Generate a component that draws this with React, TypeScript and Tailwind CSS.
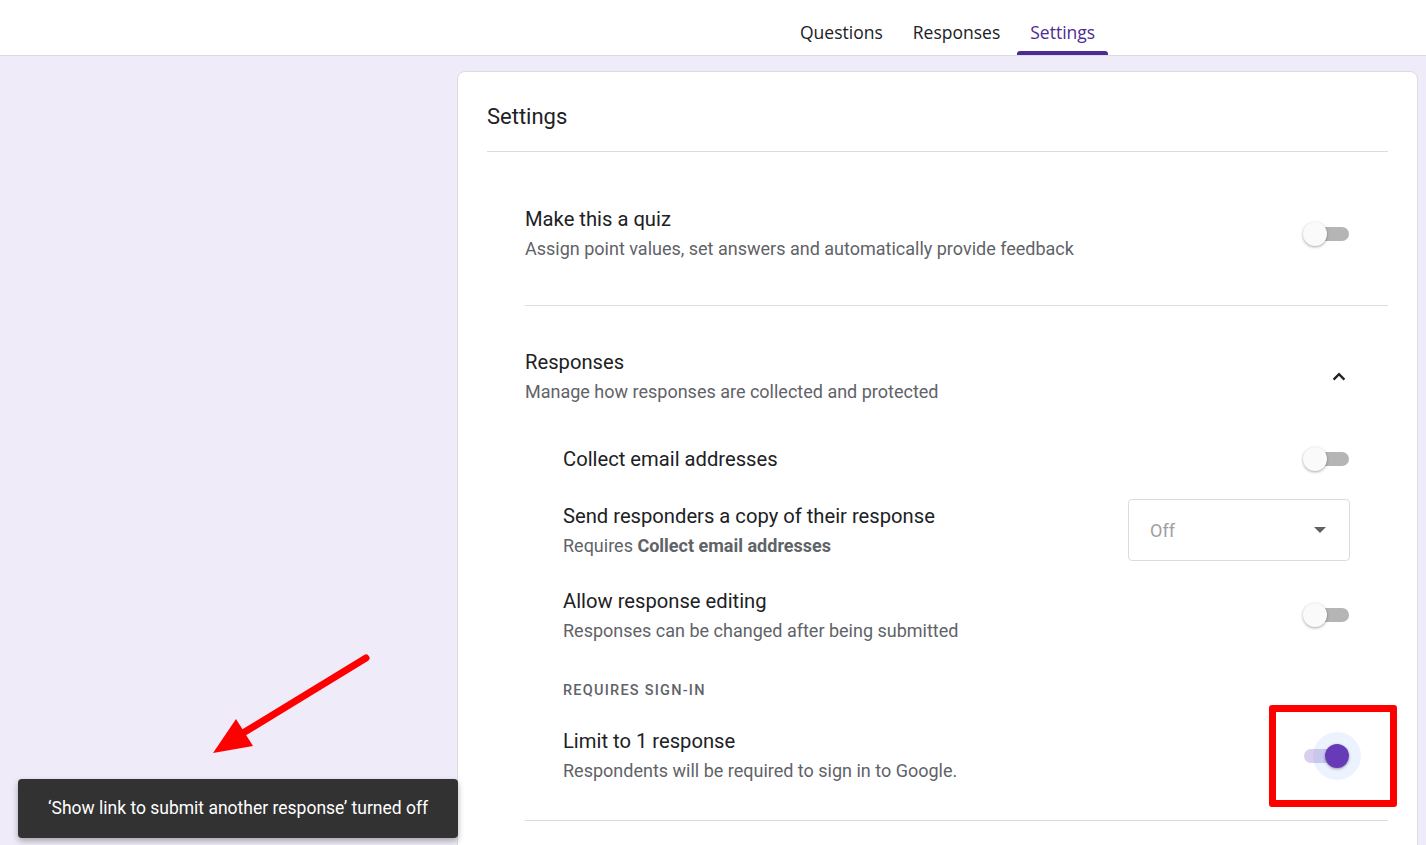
import React from 'react';

const Toggle = ({ on = false }: { on?: boolean }) => (
  <div className="relative w-[46px] h-[24px] shrink-0">
    {on ? (
      <>
        <div className="absolute left-[1px] top-[5px] w-[38px] h-[14px] rounded-full bg-[#d8cfee]" />
        <div className="absolute left-[10px] top-[-12px] w-[48px] h-[48px] rounded-full bg-[rgba(66,133,244,0.1)]" />
        <div className="absolute left-[22px] top-0 w-6 h-6 rounded-full bg-[#673ab7] shadow-[0_1px_3px_rgba(0,0,0,0.35)]" />
      </>
    ) : (
      <>
        <div className="absolute right-0 top-[5px] w-[35px] h-[14px] rounded-full bg-[#b5b5b5]" />
        <div className="absolute left-0 top-0 w-6 h-6 rounded-full bg-[#fafafa] shadow-[0_1px_3px_rgba(0,0,0,0.35)]" />
      </>
    )}
  </div>
);

const Tab = ({ label, active = false }: { label: string; active?: boolean }) => (
  <div className="relative h-[55px] px-[13px] pt-[20px]">
    <span className={`block text-[17.5px] leading-[24px] font-medium ${active ? 'text-[#4c2c92]' : 'text-[#202124]'}`}>{label}</span>
    {active && <div className="absolute left-0 right-0 bottom-0 h-[4px] rounded-t-[3px] bg-[#4c2c92]" />}
  </div>
);

export default function App() {
  return (
    <div className="relative h-[845px] w-[1426px] overflow-hidden bg-[#f0ebf8]" style={{ fontFamily: 'Roboto, "Liberation Sans", sans-serif' }}>
      <header className="h-[56px] bg-white border-b border-[#dadce0] flex pl-[787px] gap-[4px]" style={{ fontFamily: '"Open Sans", Roboto, sans-serif' }}>
        <Tab label="Questions" />
        <Tab label="Responses" />
        <Tab label="Settings" active />
      </header>

      <div className="flex pt-[15px] pl-[457px]">
        <div className="w-[961px] h-[900px] bg-white border border-[#dadce0] rounded-[8px] px-[29px]">
          <div className="pt-[29px] pb-[18px] border-b border-[#dadce0]">
            <h1 className="text-[22px] leading-[32px] text-[#202124]">Settings</h1>
          </div>

          <div className="ml-[38px] border-b border-[#dadce0] pt-[54px] pb-[44px] flex items-center">
            <div className="flex-1">
              <div className="text-[20.2px] leading-[26px] text-[#202124]">Make this a quiz</div>
              <div className="mt-[5px] text-[18px] leading-[24px] text-[#5f6368]">Assign point values, set answers and automatically provide feedback</div>
            </div>
            <div className="mr-[39px]"><Toggle /></div>
          </div>

          <div className="ml-[38px] border-b border-[#dadce0] pt-[43px] pb-[37px]">
            <div className="flex items-center">
              <div className="flex-1">
                <div className="text-[20.2px] leading-[26px] text-[#202124]">Responses</div>
                <div className="mt-[5px] text-[18px] leading-[24px] text-[#5f6368]">Manage how responses are collected and protected</div>
              </div>
              <svg width="24" height="24" viewBox="0 0 24 24" className="mr-[37px]">
                <path d="M6.6 14.6 12 9.2l5.4 5.4" fill="none" stroke="#202124" strokeWidth="2.3" />
              </svg>
            </div>

            <div className="ml-[38px] mr-[39px]">
              <div className="mt-[42px] flex items-center">
                <div className="flex-1 text-[20.2px] leading-[26px] text-[#202124]">Collect email addresses</div>
                <Toggle />
              </div>

              <div className="mt-[27px] flex items-center">
                <div className="flex-1">
                  <div className="text-[20.2px] leading-[26px] text-[#202124]">Send responders a copy of their response</div>
                  <div className="mt-[5px] text-[18px] leading-[24px] text-[#5f6368]">
                    Requires <span className="font-bold">Collect email addresses</span>
                  </div>
                </div>
                <div className="w-[222px] h-[62px] -mr-px border border-[#dadce0] rounded-[4px] flex items-center justify-between pl-[21px] pr-[23px]">
                  <span className="text-[18px] text-[#a0a0a0]">Off</span>
                  <svg width="12" height="6" viewBox="0 0 12 6"><path d="M0 0h12L6 6z" fill="#5f6368" /></svg>
                </div>
              </div>

              <div className="mt-[27px] flex items-end">
                <div className="flex-1">
                  <div className="text-[20.2px] leading-[26px] text-[#202124]">Allow response editing</div>
                  <div className="mt-[5px] text-[18px] leading-[24px] text-[#5f6368]">Responses can be changed after being submitted</div>
                </div>
                <div className="mb-[16px]"><Toggle /></div>
              </div>

              <div className="mt-[38px] text-[14.5px] leading-[20px] font-medium tracking-[0.085em] text-[#5f6368]">REQUIRES SIGN-IN</div>

              <div className="mt-[27px] flex items-center">
                <div className="flex-1">
                  <div className="text-[20.2px] leading-[26px] text-[#202124]">Limit to 1 response</div>
                  <div className="mt-[5px] text-[18px] leading-[24px] text-[#5f6368]">Respondents will be required to sign in to Google.</div>
                </div>
                <Toggle on />
              </div>
            </div>
          </div>
        </div>
      </div>

      {/* annotation */}
      <div className="absolute left-[1269px] top-[705px] w-[128px] h-[102px] border-[7px] border-[#ff0000] rounded-[3px]" />
      <svg className="absolute left-0 top-0" width="1426" height="845">
        <line x1="366" y1="658" x2="243" y2="733" stroke="#ff0000" strokeWidth="7" strokeLinecap="round" />
        <polygon points="213,753 236,719 253,746" fill="#ff0000" />
      </svg>

      {/* snackbar */}
      <div className="absolute left-[18px] top-[779px] w-[440px] h-[59px] bg-[#323232] rounded-[4px] shadow-[0_3px_6px_rgba(0,0,0,0.3)] flex items-center pl-[30px]">
        <span className="text-[17.5px] text-white">‘Show link to submit another response’ turned off</span>
      </div>
    </div>
  );
}
